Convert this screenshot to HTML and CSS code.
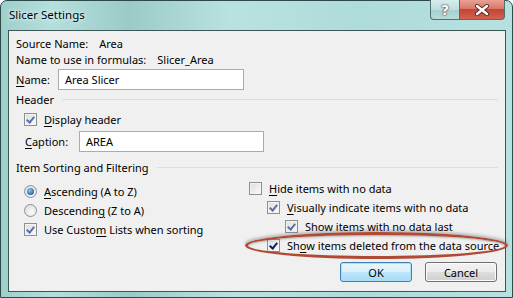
FILE: index.html
```html
<!DOCTYPE html>
<html lang="en">
<head>
    <meta charset="UTF-8">
    <title>Slicer Settings</title>
    <link rel="stylesheet" href="styles.css">
</head>
<body>
    <div class="window">
        <div class="titlebar">
            <span class="title">Slicer Settings</span>
            <div class="capbtns">
                <span class="help">?</span>
                <span class="close">
                    <svg width="16" height="12" viewBox="0 0 16 12">
                        <path d="M3 2 L13 10 M13 2 L3 10" stroke="#5a2a24" stroke-width="4.2" stroke-linecap="round"/>
                        <path d="M3 2 L13 10 M13 2 L3 10" stroke="#fff" stroke-width="2.4" stroke-linecap="round"/>
                    </svg>
                </span>
            </div>
        </div>

        <div class="client">
            <div class="info">Source Name:<span class="val1">Area</span></div>
            <div class="info">Name to use in formulas:<span class="val2">Slicer_Area</span></div>
            <div class="namerow">
                <label><u>N</u>ame:</label>
                <div class="textbox name-box">Area Slicer</div>
            </div>

            <div class="group">Header<span class="rule"></span></div>
            <div class="opt indent">
                <span class="chk on"></span><span><u>D</u>isplay header</span>
            </div>
            <div class="caprow">
                <label><u>C</u>aption:</label>
                <div class="textbox cap-box">AREA</div>
            </div>

            <div class="group sortgroup">Item Sorting and Filtering<span class="rule"></span></div>
            <div class="cols">
                <div class="leftcol">
                    <div class="opt"><span class="radio on"></span><span><u>A</u>scending (A to Z)</span></div>
                    <div class="opt"><span class="radio"></span><span>Descendin<u>g</u> (Z to A)</span></div>
                    <div class="opt"><span class="chk on"></span><span>Use Custo<u>m</u> Lists when sorting</span></div>
                </div>
                <div class="rightcol">
                    <div class="opt"><span class="chk"></span><span><u>H</u>ide items with no data</span></div>
                    <div class="opt lvl1"><span class="chk on"></span><span><u>V</u>isually indicate items with no data</span></div>
                    <div class="opt lvl2"><span class="chk on"></span><span>Show <u>i</u>tems with no data last</span></div>
                    <div class="opt lvl1"><span class="chk on dark"></span><span>Sh<u>o</u>w items deleted from the data source</span></div>
                </div>
            </div>

            <div class="buttons">
                <button class="btn default">OK</button>
                <button class="btn">Cancel</button>
            </div>
        </div>

        <div class="highlight"></div>
    </div>
</body>
</html>
```

FILE: styles.css
```css
*{
    margin: 0px;
    padding: 0px;
    box-sizing: border-box;
}
body{
    width: 513px;
    height: 298px;
    overflow: hidden;
    font-family: "Noto Sans", "Open Sans", sans-serif;
    font-size: 11px;
    color: #000;
    background: #fff;
}
.window{
    position: relative;
    width: 513px;
    height: 298px;
    padding: 0px 6px 5px 7px;
    border: 1px solid #2c4a48;
    border-radius: 7px 7px 0px 0px;
    background: linear-gradient(90deg, #9fcfcb 0%, #b3dfdd 10%, #9ccbc6 25%, #b8e2e0 45%, #aedcda 70%, #b6e1e0 100%);
}
.titlebar{
    height: 29px;
    display: flex;
    justify-content: space-between;
    align-items: flex-start;
}
.title{
    margin-top: 6px;
    margin-left: 1px;
    font-size: 11.5px;
    text-shadow: 0 0 6px #e6f6f5, 0 0 3px #e6f6f5;
}
.capbtns{
    display: flex;
    margin-right: 1px;
    margin-top: -1px;
}
.capbtns span{
    height: 20px;
    display: flex;
    align-items: center;
    justify-content: center;
    border: 1px solid #4f6f70;
    border-top: none;
}
.help{
    width: 29px;
    border-right: none !important;
    border-radius: 0px 0px 0px 4px;
    background: linear-gradient(#d6ecec 0%, #bfdedd 50%, #a6cfcd 51%, #b9dbd9 100%);
    color: #fff;
    font-weight: bold;
    font-size: 14px;
    font-family: "DejaVu Sans", sans-serif;
    text-shadow: 0 0 2px #333, 0 0 1px #333;
}
.close{
    width: 46px;
    border-radius: 0px 0px 4px 0px;
    background: linear-gradient(#e8a092 0%, #d9786a 45%, #c54433 50%, #d2614d 100%);
}

.client{
    height: 262px;
    border: 1px solid #3d5654;
    background: #f0f0f0;
    padding: 5px 8px 0px 7px;
    display: flex;
    flex-direction: column;
    white-space: nowrap;
}
.info{
    height: 16px;
    line-height: 16px;
}
.val1{
    margin-left: 11px;
}
.val2{
    margin-left: 11px;
}
u{
    text-decoration: underline;
    text-underline-offset: 2px;
}
.namerow, .caprow{
    display: flex;
    align-items: center;
}
.namerow{
    height: 22px;
}
.namerow label{
    width: 42px;
}
.textbox{
    height: 21px;
    border: 1px solid #ababab;
    background: #fff;
    padding-left: 6px;
    line-height: 19px;
}
.name-box{
    width: 186px;
}
.group{
    display: flex;
    align-items: center;
    height: 16px;
    margin-top: 1px;
}
.rule{
    flex: 1;
    height: 1px;
    margin-left: 8px;
    margin-right: -1px;
    background: #d5dfe5;
}
.sortgroup{
    margin-top: 7px;
}
.opt{
    display: flex;
    align-items: center;
    height: 19px;
}
.opt .chk, .opt .radio{
    margin-right: 7px;
}
.indent{
    margin-left: 8px;
    margin-top: 3px;
}
.caprow{
    height: 21px;
    margin-left: 9px;
    margin-top: 2px;
}
.caprow label{
    width: 54px;
}
.cap-box{
    width: 185px;
}
.chk{
    width: 13px;
    height: 13px;
    flex: none;
    border: 1px solid #8e8f8f;
    background: linear-gradient(135deg, #dcdcdc, #fbfbfb);
    box-shadow: inset 0 0 0 1px #f4f4f4;
    position: relative;
}
.chk.on::after{
    content: "";
    position: absolute;
    left: 3px;
    top: 1px;
    width: 3px;
    height: 6px;
    border-right: 2px solid #5a6ea8;
    border-bottom: 2px solid #5a6ea8;
    transform: rotate(40deg);
}
.chk.dark::after{
    border-color: #101a6c;
}
.radio{
    width: 13px;
    height: 13px;
    flex: none;
    border-radius: 50%;
    border: 1px solid #8e8f8f;
    background: radial-gradient(circle at 60% 65%, #fafafa, #d8d8d8);
    position: relative;
}
.radio.on::after{
    content: "";
    position: absolute;
    left: 2px;
    top: 2px;
    width: 7px;
    height: 7px;
    border-radius: 50%;
    background: radial-gradient(circle at 40% 35%, #8fc8f4, #1f5a9c 80%);
}
.cols{
    display: flex;
}
.leftcol{
    width: 225px;
    flex: none;
    margin-left: 8px;
    margin-top: 7px;
}
.rightcol{
    margin-top: 4px;
}
.lvl1{
    margin-left: 18px;
}
.lvl2{
    margin-left: 36px;
}
.buttons{
    display: flex;
    justify-content: flex-end;
    gap: 13px;
    margin-top: 7px;
}
.btn{
    width: 72px;
    height: 20px;
    font-family: inherit;
    font-size: 11px;
    border: 1px solid #707070;
    border-radius: 3px;
    background: linear-gradient(#f2f2f2 0%, #ebebeb 50%, #dddddd 51%, #cfcfcf 100%);
    box-shadow: inset 0 0 0 1px #fcfcfc;
}
.btn.default{
    border-color: #3c7fb1;
    background: linear-gradient(#eaf6fd 0%, #d9f0fc 50%, #bee6fd 51%, #a7d9f5 100%);
    box-shadow: inset 0 0 0 1px #a9e3fb;
}
.highlight{
    position: absolute;
    left: 244px;
    top: 231px;
    width: 263px;
    height: 27px;
    border: 3px solid #b14a35;
    border-radius: 50%;
    box-shadow: 0 -2px 3px rgba(80,80,80,.35), inset 0 1px 2px rgba(80,80,80,.4);
    pointer-events: none;
}
```
